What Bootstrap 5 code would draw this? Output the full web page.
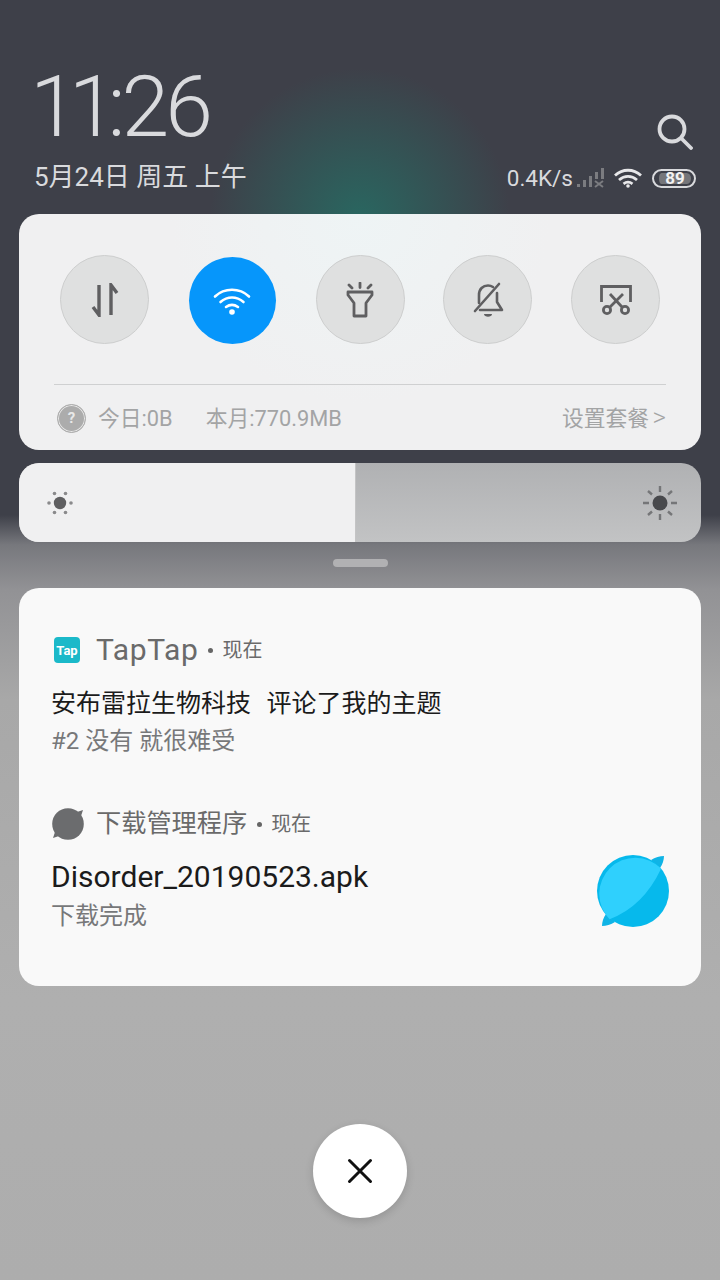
<!DOCTYPE html>
<html lang="zh-CN">
<head>
    <meta charset="UTF-8">
    <meta name="viewport" content="width=device-width, initial-scale=1.0">
    <title>通知栏</title>
    <link href="https://cdn.jsdelivr.net/npm/bootstrap@5.3.0/dist/css/bootstrap.min.css" rel="stylesheet">
    <style>
        html, body { height: 1280px; overflow: hidden; }
        body {
            font-family: Roboto, "Noto Sans CJK SC", sans-serif;
            background:
                radial-gradient(ellipse 150px 150px at 360px 218px, rgba(36,112,102,.8), rgba(36,112,102,0) 100%),
                linear-gradient(to bottom, #3e4049 0, #3e4049 515px, #77787d 545px, #929295 590px, #a8a8a8 700px, #afafaf 1000px, #adadad 1280px);
        }
        .shade { width: 720px; height: 1280px; padding: 0 19px; }
        .clock-row { height: 214px; padding: 68px 0 0 16px; color: #d9dadd; }
        .clock { font-size: 86px; font-weight: 300; line-height: 78px; letter-spacing: -4px; margin-left: -5px; }
        .clock-ones { letter-spacing: -9px; }
        .date-line { font-size: 26px; line-height: 30px; margin: 16px 0 0 -1px; white-space: nowrap; }
        .search-ico { margin: 46px 8px 0 0; }
        .stat-line { margin: 15px 5px 0 0; }
        .speed { font-size: 22.5px; line-height: 26px; }
        .sig-ico { margin: 0 10px 0 3px; }
        .wifi-ico { margin-right: 10px; }
        .bat {
            width: 44px; height: 19px; border: 2px solid #d9dadd; border-radius: 10px;
            font-size: 17px; line-height: 11px; font-weight: 700; text-align: center; color: #f2f2f2;
            background: #75767a; background-clip: content-box; padding: 2px 3px 2px 5px;
        }
        .ctl-panel {
            height: 236px; border-radius: 20px;
            background: radial-gradient(circle 190px at 341px 0, #eef4f5, #f0f0f1);
            padding: 41px 35px 0;
        }
        .tog-row { padding: 0 6px; height: 90px; }
        .tog {
            width: 89px; height: 89px; border-radius: 50%; background: #dfe0e0; border: 1px solid #cdcece;
        }
        .tog-on { width: 87px; height: 87px; background: #0696fb; border: 0; margin: 2px 1px 0; }
        .rule { border-top: 1px solid #cfd0d1; margin-top: 39px; }
        .data-row { color: #a3a4a5; font-size: 21.8px; line-height: 28px; margin-top: 19px; padding-left: 3px; }
        .help-dot {
            width: 29px; height: 29px; border-radius: 50%; background: #acacac; border: 1px solid #acacac;
            box-shadow: inset 0 0 0 1px #e6e6e6; color: #e8e8e8; font-size: 15px; font-weight: 700;
            line-height: 27px; text-align: center; margin-right: 12px;
        }
        .month-use { margin-left: 33px; }
        .more-arrow { font-size: 26px; font-weight: 300; line-height: 26px; margin-left: -2px; }
        .slider-box {
            height: 79px; margin-top: 13px; border-radius: 20px; overflow: hidden;
            background: linear-gradient(to bottom, #b0b1b3, #c2c3c4);
        }
        .slider-fill { width: 337px; background: #f0f0f1; padding-left: 28px; border-right: 1px solid #c4c4c5; }
        .slider-end { padding-right: 24px; }
        .pull-bar { width: 55px; height: 8px; border-radius: 4px; background: #b1b1b3; margin: 17px auto 21px; }
        .notif-card { height: 398px; border-radius: 20px; background: #f9f9f9; padding: 47px 32px 0; }
        .app-line { height: 30px; }
        .app-ico { width: 34px; flex: none; margin-right: 11px; }
        .app-name { color: #6a6a6a; font-size: 30px; line-height: 30px; letter-spacing: .6px; }
        .app-name-cn { font-size: 25.2px; letter-spacing: 0; }
        .app-when { color: #6a6a6a; font-size: 20px; }
        .when-dot { width: 5px; height: 5px; background: #666; border-radius: 50%; margin: 0 9px 0 10px; }
        .notif-title { color: #1b1b1b; font-size: 25px; line-height: 32px; margin-top: 23px; white-space: pre; word-spacing: 1.5px; }
        .notif-file { color: #1b1b1b; font-size: 30px; line-height: 34px; margin-top: 21px; }
        .notif-sub { color: #77787a; font-size: 24px; line-height: 32px; margin-top: 5px; }
        .file-sub { margin-top: 6px; }
        .second-item { margin-top: 52px; }
        .planet { margin-top: 16px; flex: none; }
        .close-wrap { margin-top: 138px; }
        .close-btn {
            width: 94px; height: 94px; border-radius: 50%; background: #fff; border: 0;
            box-shadow: 0 3px 8px rgba(0,0,0,.15);
        }
    </style>
</head>
<body>
<div class="shade">
    <div class="clock-row d-flex justify-content-between">
        <div>
            <div class="clock"><span class="clock-ones">11</span>:26</div>
            <div class="date-line">5月24日 周五 上午</div>
        </div>
        <div class="d-flex flex-column align-items-end">
            <svg class="search-ico" width="36" height="36" viewBox="0 0 36 36" fill="none" stroke="#d9dadd" stroke-width="3.800" stroke-linecap="round"><circle cx="15" cy="15" r="12.500"/><path d="M24.500 24.500L34 34"/></svg>
            <div class="stat-line d-flex align-items-center">
                <span class="speed">0.4K/s</span>
                <svg class="sig-ico" width="28" height="20" viewBox="0 0 28 20" fill="#7b7c80"><path d="M1 16h3v3H1zM7 12h3v7H7zM13 8h3v11h-3zM19 4h3v7h-3zM25 0h3v11h-3z"/><path d="M19 13l8 6M27 13l-8 6" stroke="#7b7c80" stroke-width="2"/></svg>
                <svg class="wifi-ico" width="28" height="20" viewBox="0 0 28 20" fill="none" stroke="#e8e8ea" stroke-width="2.800"><path d="M1 7.500C8.500 .5 19.500 .5 27 7.500M5 12c5.500-4.800 12.500-4.800 18 0M9.500 15.800c2.800-2 6.200-2 9 0"/><circle cx="14" cy="18" r="1.800" fill="#e8e8ea" stroke="none"/></svg>
                <div class="bat">89</div>
            </div>
        </div>
    </div>

    <div class="ctl-panel">
        <div class="tog-row d-flex justify-content-between">
            <div class="tog d-flex align-items-center justify-content-center">
                <svg width="30" height="34" viewBox="0 0 30 34" fill="none" stroke="#5f5f61" stroke-width="3.400"><path d="M9 2v30L3 24"/><path d="M21 32V2l6 8"/></svg>
            </div>
            <div class="tog tog-on d-flex align-items-center justify-content-center">
                <svg width="38" height="28" viewBox="0 0 38 28" fill="none" stroke="#fff" stroke-width="2.600" stroke-linecap="round"><path d="M2 9.500C11.500 .5 26.500 .5 36 9.500M7.500 15c7-6 16-6 23 0M13 20c3.600-2.600 8.400-2.600 12 0"/><circle cx="19" cy="25" r="2.800" fill="#fff" stroke="none"/></svg>
            </div>
            <div class="tog d-flex align-items-center justify-content-center">
                <svg width="28" height="36" viewBox="0 0 28 36" fill="none" stroke="#5f5f61" stroke-width="2.800" stroke-linecap="round" stroke-linejoin="round"><path d="M3 3l3 3M14 1v4.500M25 3l-3 3"/><path d="M2 10h24v3l-6 8v13H8V21l-6-8z"/></svg>
            </div>
            <div class="tog d-flex align-items-center justify-content-center">
                <svg width="32" height="36" viewBox="0 0 32 36" fill="none" stroke="#5f5f61" stroke-width="2.600" stroke-linecap="round" stroke-linejoin="round"><path d="M7 21V13C7 7 11 3.500 16 3.500c1.800 0 3.500.5 5 1.500"/><path d="M25 11v9l5 8H8"/><path d="M3 29L27 2"/><path d="M12 32h8c0 3.500-8 3.500-8 0z" fill="#5f5f61" stroke="none"/></svg>
            </div>
            <div class="tog d-flex align-items-center justify-content-center">
                <svg width="32" height="30" viewBox="0 0 32 30" fill="none" stroke="#5f5f61" stroke-width="2.800"><path d="M1.500 17V1.500h29V17"/><path d="M10 9l12 13M23 9L10 22"/><circle cx="7" cy="25" r="3.600"/><circle cx="25" cy="25" r="3.600"/></svg>
            </div>
        </div>
        <div class="rule"></div>
        <div class="data-row d-flex align-items-center">
            <div class="help-dot">?</div>
            <span>今日:0B</span>
            <span class="month-use">本月:770.9MB</span>
            <span class="ms-auto">设置套餐 <span class="more-arrow">&gt;</span></span>
        </div>
    </div>

    <div class="slider-box d-flex">
        <div class="slider-fill d-flex align-items-center">
            <svg width="26" height="26" viewBox="0 0 26 26" fill="#8a8a8c"><circle cx="13" cy="13" r="6.200" fill="#5f5f61"/><circle cx="2" cy="13" r="1.800"/><circle cx="24" cy="13" r="1.800"/><circle cx="7.500" cy="3.500" r="1.800"/><circle cx="18.500" cy="3.500" r="1.800"/><circle cx="7.500" cy="22.500" r="1.800"/><circle cx="18.500" cy="22.500" r="1.800"/></svg>
        </div>
        <div class="slider-end flex-grow-1 d-flex align-items-center justify-content-end">
            <svg width="34" height="34" viewBox="0 0 34 34" fill="none" stroke="#757678" stroke-width="2.400"><path d="M17 0v6M17 28v6M0 17h6M28 17h6M5 5l4 3.500M29 5l-4 3.500M5 29l4-3.500M29 29l-4-3.500"/><circle cx="17" cy="17" r="7.500" fill="#48494c" stroke="none"/></svg>
        </div>
    </div>

    <div class="pull-bar"></div>

    <div class="notif-card">
        <div class="app-line d-flex align-items-center">
            <svg class="app-ico" height="26" viewBox="0 0 34 26"><rect x="3" width="26" height="26" rx="4" fill="#1bb9c9"/><text x="16" y="17.500" text-anchor="middle" fill="#fff" font-family="Roboto, sans-serif" font-weight="700" font-size="13">Tap</text></svg>
            <span class="app-name">TapTap</span>
            <span class="when-dot"></span>
            <span class="app-when">现在</span>
        </div>
        <div class="notif-title">安布雷拉生物科技  评论了我的主题</div>
        <div class="notif-sub">#2 没有 就很难受</div>

        <div class="second-item">
            <div class="app-line d-flex align-items-center">
                <svg class="app-ico" height="34" viewBox="0 0 34 34" fill="#6b6c6e"><circle cx="17" cy="17" r="15.800"/><path d="M26 5l6-2-2 6zM8 29l-6 2 2-6z"/></svg>
                <span class="app-name app-name-cn">下载管理程序</span>
                <span class="when-dot"></span>
                <span class="app-when">现在</span>
            </div>
            <div class="d-flex justify-content-between align-items-start">
                <div>
                    <div class="notif-file">Disorder_20190523.apk</div>
                    <div class="notif-sub file-sub">下载完成</div>
                </div>
                <svg class="planet" width="72" height="72" viewBox="0 0 72 72"><path d="M54 5C58 2.500 63 1 67 1C67 5 65.500 9.500 63 13zM18 67C14 69.500 9 71 5 71C5 67 6.500 62.500 9 59z" fill="#10b4e6"/><circle cx="36" cy="36" r="36" fill="#06b9ec"/><path d="M64.200 13.600A36 36 0 1 0 12.600 64.200Q46 52 64.200 13.600z" fill="#2fd0fd"/></svg>
            </div>
        </div>
    </div>

    <div class="close-wrap d-flex justify-content-center">
        <button class="close-btn d-flex align-items-center justify-content-center">
            <svg width="26" height="26" viewBox="0 0 26 26" stroke="#111" stroke-width="3" stroke-linecap="round"><path d="M2.500 2.500l21 21M23.500 2.500l-21 21"/></svg>
        </button>
    </div>
</div>
<script src="https://cdn.jsdelivr.net/npm/bootstrap@5.3.0/dist/js/bootstrap.bundle.min.js"></script>
</body>
</html>
